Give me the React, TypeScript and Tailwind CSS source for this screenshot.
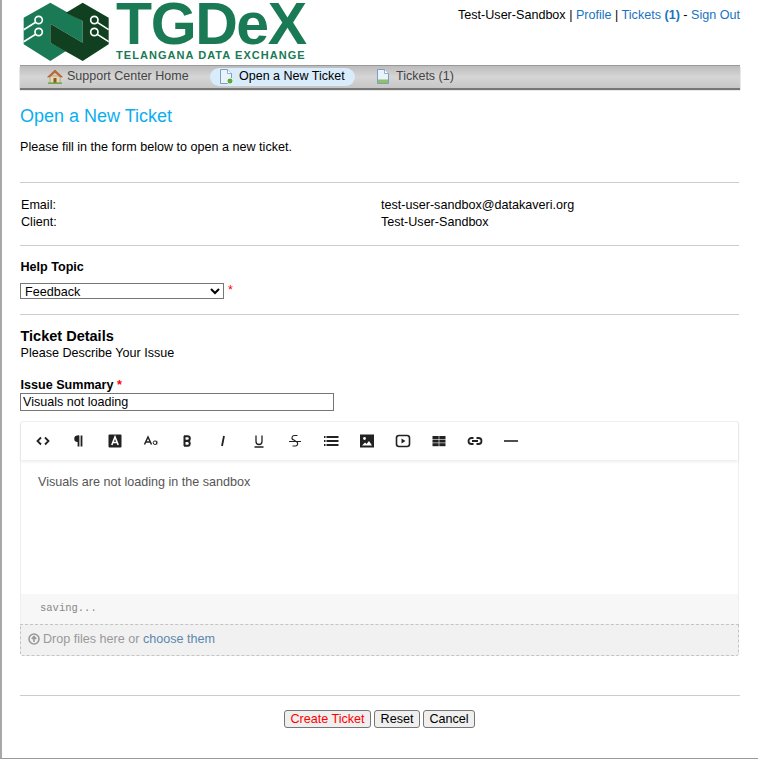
const bodyFont = "font-['Liberation_Sans',Arial,sans-serif]";

function Logo() {
  return (
    <svg width="90" height="62" viewBox="60 0 270 186" className="shrink-0">
      <polygon fill="#1A7A55" points="68,50 148,5 245,60 245,125 148,68 148,125 195,150 148,180 68,130" />
      <polygon fill="#10401F" points="195,35 245,5 323,50 323,130 245,180 148,125 148,68 245,125 245,60" />
      <g stroke="#fff" strokeWidth="5" fill="none">
        <circle cx="113" cy="57" r="11" />
        <circle cx="113" cy="93" r="11" />
        <circle cx="280" cy="57" r="11" />
        <circle cx="280" cy="93" r="11" />
        <path d="M104 64 L68 86 M104 100 L68 122 M289 64 L323 86 M289 100 L323 122" />
      </g>
    </svg>
  );
}

function HomeIcon() {
  return (
    <svg width="16" height="15" viewBox="0 0 16 15">
      <rect x="3" y="7" width="10" height="7" fill="#E9D9B0" stroke="#A89368" strokeWidth="0.7" />
      <rect x="6.5" y="9" width="3" height="5" fill="#8A5A2B" />
      <path d="M0.5 8 L8 1 L15.5 8 L13.5 8 L8 3.5 L2.5 8 Z" fill="#C8692B" stroke="#9A4A1A" strokeWidth="0.5" />
      <rect x="1" y="13.5" width="14" height="1.5" fill="#6FA84B" />
    </svg>
  );
}

function PageIcon({ variant }: { variant: "new" | "list" }) {
  return (
    <svg width="14" height="15" viewBox="0 0 14 15">
      <path d="M1.5 0.5 H8.5 L12.5 4.5 V14.5 H1.5 Z" fill="#EAF2FB" stroke="#7C9CC0" strokeWidth="1" />
      <path d="M8.5 0.5 V4.5 H12.5" fill="#fff" stroke="#7C9CC0" strokeWidth="0.8" />
      {variant === "new" ? (
        <circle cx="11" cy="12" r="3" fill="#5FA83C" stroke="#fff" strokeWidth="0.8" />
      ) : (
        <rect x="2" y="10.5" width="10" height="3.5" fill="#8FC06A" />
      )}
    </svg>
  );
}

const stroke = { fill: "none", stroke: "#222", strokeWidth: 1.6 };

const toolbarIcons = [
  <path key="code" d="M6 4.5 L2.5 8 L6 11.5 M10 4.5 L13.5 8 L10 11.5" {...stroke} strokeWidth={1.8} />,
  <g key="para">
    <path d="M7.5 2.5 V13.5 M10.5 2.5 V13.5" {...stroke} strokeWidth={1.8} />
    <path d="M12.5 2.5 H6.5 A3.2 3.2 0 0 0 6.5 9 H8 V2.5 Z" fill="#222" />
  </g>,
  <g key="format">
    <rect x="1.5" y="1.5" width="13" height="13" rx="1" fill="#222" />
    <path d="M4.8 12 L8 4 L11.2 12 M6 9.5 H10" fill="none" stroke="#fff" strokeWidth="1.6" />
  </g>,
  <g key="size">
    <path d="M1.5 11.5 L5 4 L8.5 11.5 M2.8 9 H7.2" {...stroke} strokeWidth={1.5} />
    <circle cx="12" cy="9.7" r="1.8" fill="none" stroke="#222" strokeWidth="1" />
    <path d="M13.8 7.8 V11.5" stroke="#222" strokeWidth="1" />
  </g>,
  <path key="bold" d="M5.5 3 V13 M5 3.2 H8.5 A2.3 2.3 0 0 1 8.5 7.8 H5 M5 8 H9 A2.5 2.5 0 0 1 9 12.8 H5" {...stroke} strokeWidth={2} />,
  <path key="italic" d="M9 3 L7 13" {...stroke} strokeWidth={1.8} />,
  <path key="underline" d="M5 2.5 V8.5 A3 3 0 0 0 11 8.5 V2.5 M3.5 14 H12.5" {...stroke} strokeWidth={1.3} />,
  <path key="strike" d="M10.5 2.5 H7.5 A2.2 2.2 0 0 0 7 7 L9 8.5 A2.3 2.3 0 0 1 8.2 13 H5.5 M2 8.5 H14" {...stroke} strokeWidth={1.1} />,
  <path key="list" d="M1 4 H2.5 M1 8 H2.5 M1 12 H2.5 M3.5 4 H15.5 M3.5 8 H15.5 M3.5 12 H15.5" {...stroke} strokeWidth={1.8} />,
  <g key="image">
    <rect x="1" y="1.5" width="14" height="13" fill="#222" />
    <circle cx="5.5" cy="5.5" r="1.4" fill="#fff" />
    <path d="M3 12.5 L6 9.5 L7.5 11 L10 8 L13 12.5 Z" fill="#fff" />
  </g>,
  <g key="video">
    <rect x="1.5" y="2.5" width="13" height="11" rx="2.5" {...stroke} />
    <path d="M6.5 5.5 L10.5 8 L6.5 10.5 Z" fill="#222" />
  </g>,
  <g key="table" fill="#222">
    <rect x="1.5" y="3" width="6.2" height="3" />
    <rect x="8.3" y="3" width="6.2" height="3" />
    <rect x="1.5" y="6.6" width="6.2" height="3" />
    <rect x="8.3" y="6.6" width="6.2" height="3" />
    <rect x="1.5" y="10.2" width="6.2" height="3" />
    <rect x="8.3" y="10.2" width="6.2" height="3" />
  </g>,
  <path key="link" d="M6.5 5 H4.5 A3 3 0 0 0 4.5 11 H6.5 M9.5 5 H11.5 A3 3 0 0 1 11.5 11 H9.5 M5 8 H11" {...stroke} strokeWidth={1.8} />,
  <path key="rule" d="M1 8 H15" {...stroke} />,
];

function Divider({ className = "" }: { className?: string }) {
  return <div className={`h-px bg-[#ccc] ${className}`} />;
}

export default function App() {
  return (
    <div className={`${bodyFont} h-[759px] w-[758px] overflow-hidden border-b border-l-2 border-b-[#999] border-l-[#a8a8a8] bg-white text-[12.58px] leading-[17px] text-black`}>
      <div className="ml-[18px] w-[720px]">
        {/* Header */}
        <header className="flex h-[65px] justify-between">
          <div className="flex pl-[1px] pt-[1px]">
            <Logo />
            <div className="ml-[5px] flex w-[192px] flex-col text-[#1A7A55]">
              <div className="h-[46px] text-[59px] leading-[46px] font-bold tracking-[-1.4px] whitespace-nowrap">TGDeX</div>
              <div className="mt-[3px] text-[11px] leading-[11px] font-bold tracking-[1.05px] whitespace-nowrap">TELANGANA DATA EXCHANGE</div>
            </div>
          </div>
          <div className="pt-[7px] whitespace-nowrap">
            Test-User-Sandbox | <a className="text-[#1a73c0]">Profile</a> | <a className="text-[#1a73c0]">Tickets <b>(1)</b></a> - <a className="text-[#1a73c0]">Sign Out</a>
          </div>
        </header>

        {/* Nav */}
        <nav className="flex h-[23px] items-center border-t border-[#999] bg-gradient-to-b from-[#bcbcbc] via-[#d6d6d6] to-[#c6c6c6] pb-[1px] pl-[27px] text-[12.5px] shadow-[0_2px_1px_#777]">
          <div className="flex w-[163px] items-center gap-[4px] text-[#444]">
            <HomeIcon />
            <span>Support Center Home</span>
          </div>
          <div className="flex h-[18px] w-[145px] items-center gap-[6px] rounded-full bg-[#d9ecfb] pl-[9px]">
            <PageIcon variant="new" />
            <span>Open a New Ticket</span>
          </div>
          <div className="ml-[21px] flex items-center gap-[6px] text-[#444]">
            <PageIcon variant="list" />
            <span>Tickets (1)</span>
          </div>
        </nav>

        {/* Content */}
        <main>
          <h1 className="mt-[17px] text-[18px] leading-[22px] font-normal text-[#0BAEEF]">Open a New Ticket</h1>
          <p className="mt-[12px]">Please fill in the form below to open a new ticket.</p>

          <Divider className="mt-[26px] w-[719px]" />

          <div className="mt-[14px] grid grid-cols-[360px_1fr] pl-[1px]">
            <div>Email:</div>
            <div>test-user-sandbox@datakaveri.org</div>
            <div>Client:</div>
            <div>Test-User-Sandbox</div>
          </div>

          <Divider className="mt-[14px] w-[719px]" />

          <div className="mt-[13px] pl-[0.5px] font-bold">Help Topic</div>
          <div className="mt-[6px] flex items-center gap-[4px]">
            <select defaultValue="Feedback" className="h-[16px] w-[204px] border border-[#767676] text-[12.58px] leading-[14px]">
              <option>Feedback</option>
            </select>
            <span className="text-[#f00]">*</span>
          </div>

          <Divider className="mt-[15px] w-[719px]" />

          <div className="mt-[13px] pl-[0.5px] text-[14.5px] leading-[17px] font-bold">Ticket Details</div>
          <div className="pl-[0.5px]">Please Describe Your Issue</div>

          <div className="mt-[15px] pl-[0.5px] font-bold">
            Issue Summary <span className="text-[#f00]">*</span>
          </div>
          <input
            readOnly
            value="Visuals not loading"
            className="-mt-[1px] block h-[18px] w-[314px] border border-[#767676] px-[2px] text-[12.58px] leading-[14px]"
          />

          {/* Editor */}
          <div className="mt-[10px] w-[719px] rounded-[3px]">
            <div className="rounded-t-[3px] border border-b-0 border-[#eee]">
              <div className="flex h-[38px] items-center pl-[4px] shadow-[0_2px_3px_rgba(0,0,0,0.07)]">
                {toolbarIcons.map((icon, i) => (
                  <div key={i} className="flex w-[36px] justify-center">
                    <svg width="16" height="16" viewBox="0 0 16 16">{icon}</svg>
                  </div>
                ))}
              </div>
              <div className="h-[134px] pl-[17px] pt-[14px] text-[#555]">Visuals are not loading in the sandbox</div>
              <div className="flex h-[30px] items-center bg-[#f7f7f7] pb-[2px] pl-[19px] font-['Liberation_Mono',monospace] text-[10.5px] text-[#888]">saving...</div>
            </div>
            <div className="flex h-[32px] items-center gap-[3px] rounded-b-[3px] border border-dashed border-[#c4c4c4] bg-[#f1f1f1] pb-[2px] pl-[7px] text-[#999]">
              <svg width="12" height="12" viewBox="0 0 12 12">
                <circle cx="6" cy="6" r="5" fill="none" stroke="#999" strokeWidth="1.6" />
                <path d="M6 9 V4 M3.8 6 L6 3.5 L8.2 6" fill="none" stroke="#999" strokeWidth="1.6" />
              </svg>
              <span>Drop files here or <a className="text-[#5b87ad]">choose them</a></span>
            </div>
          </div>

          <Divider className="mt-[39px]" />

          {/* Actions */}
          <div className="mt-[14px] flex justify-center gap-[3px] pr-[1px]">
            <button className="h-[18px] w-[87px] rounded-[3px] border border-[#767676] bg-[#efefef] text-[12.58px] leading-[14px] text-[#f00]">Create Ticket</button>
            <button className="h-[18px] w-[46px] rounded-[3px] border border-[#767676] bg-[#efefef] text-[12.58px] leading-[14px]">Reset</button>
            <button className="h-[18px] w-[52px] rounded-[3px] border border-[#767676] bg-[#efefef] text-[12.58px] leading-[14px]">Cancel</button>
          </div>
        </main>
      </div>
    </div>
  );
}
